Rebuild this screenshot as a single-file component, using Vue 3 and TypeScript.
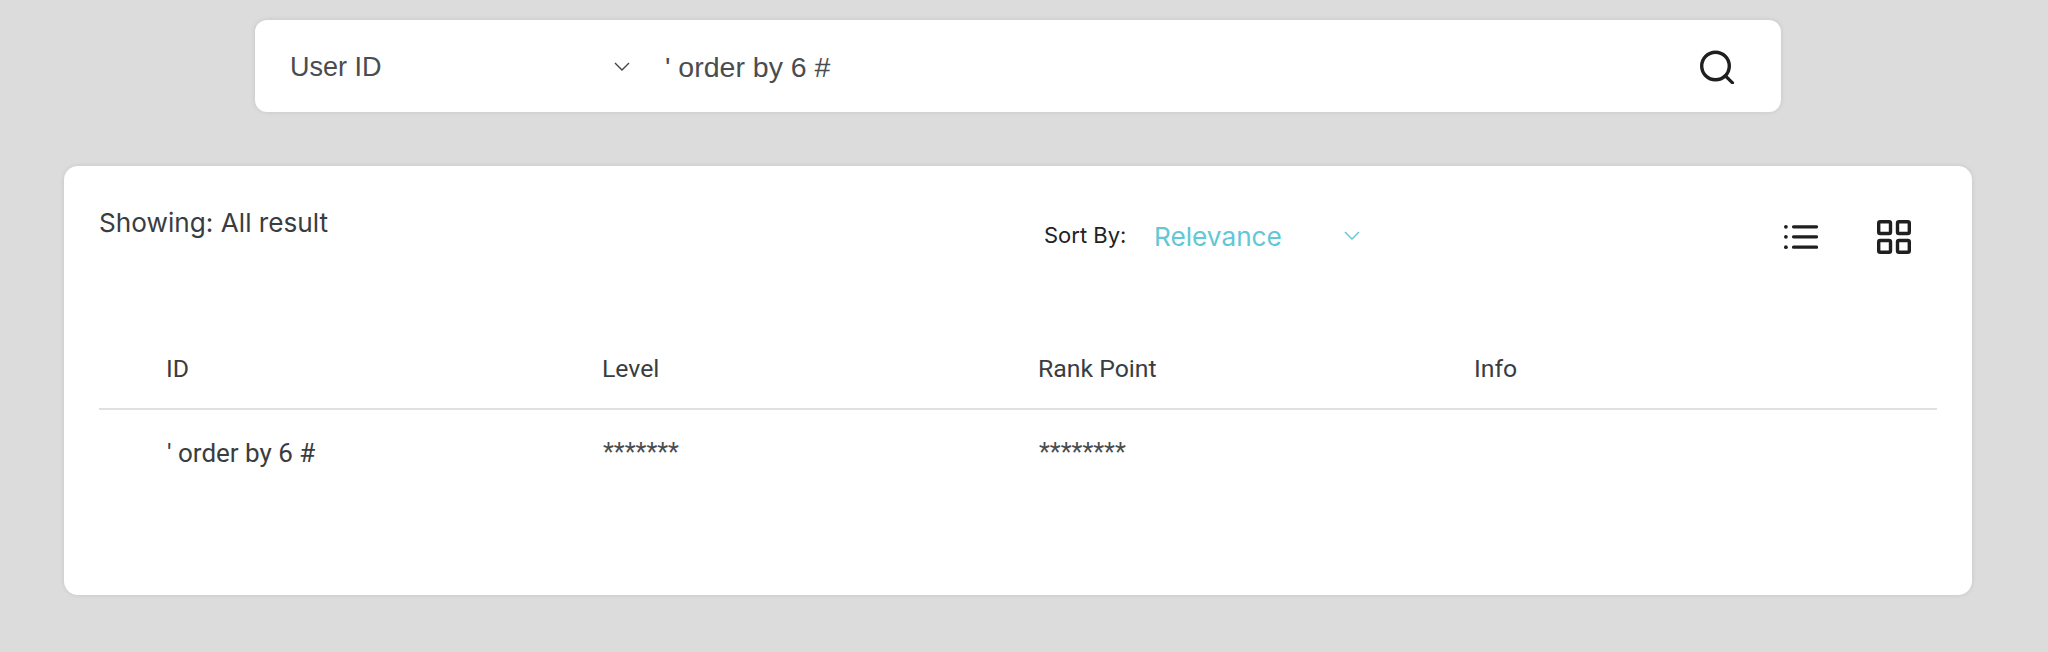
<script setup lang="ts">
const columns = ['ID', 'Level', 'Rank Point', 'Info']
const row = ["' order by 6 #", '*******', '********', '']
</script>

<template>
  <div class="page">
    <div class="search">
      <div class="field">
        <span>User ID</span>
        <svg class="chevron" width="18" height="11" viewBox="0 0 18 11" fill="none">
          <path d="M2 2l7 7 7-7" stroke="#444" stroke-width="1.4" />
        </svg>
      </div>
      <div class="query">' order by 6 #</div>
      <svg width="36" height="36" viewBox="0 0 36 36" fill="none">
        <circle cx="16.5" cy="18" r="13.8" stroke="#1f1f1f" stroke-width="3.4" />
        <path d="M26.5 28l7 6.8" stroke="#1f1f1f" stroke-width="3.2" stroke-linecap="round" />
      </svg>
    </div>

    <div class="card">
      <div class="toolbar">
        <div class="showing">Showing: All result</div>
        <div class="sort">
          <span class="sort-label">Sort By:</span>
          <span class="sort-value">Relevance</span>
          <svg width="18" height="11" viewBox="0 0 18 11" fill="none">
            <path d="M2 2l7 7 7-7" stroke="#5fc5d3" stroke-width="1.4" />
          </svg>
        </div>
        <div class="views">
          <svg width="34" height="30" viewBox="0 0 34 30" fill="none">
            <g fill="#1f1f1f">
              <circle cx="1.9" cy="4.8" r="1.9" />
              <circle cx="1.9" cy="14.8" r="1.9" />
              <circle cx="1.9" cy="25.2" r="1.9" />
            </g>
            <path
              d="M9.5 4.8h23M9.5 14.8h23M9.5 25.2h23"
              stroke="#1f1f1f"
              stroke-width="3.2"
              stroke-linecap="round"
            />
          </svg>
          <svg width="34" height="34" viewBox="0 0 34 34" fill="none" stroke="#1f1f1f" stroke-width="3.4">
            <rect x="1.7" y="1.7" width="11.8" height="11.8" rx="1.5" />
            <rect x="20.5" y="1.7" width="11.8" height="11.8" rx="1.5" />
            <rect x="1.7" y="20.5" width="11.8" height="11.8" rx="1.5" />
            <rect x="20.5" y="20.5" width="11.8" height="11.8" rx="1.5" />
          </svg>
        </div>
      </div>

      <div class="table-head">
        <div v-for="c in columns" :key="c" class="cell">{{ c }}</div>
      </div>
      <div class="table-row">
        <div v-for="(v, i) in row" :key="i" class="cell" :class="{ masked: i > 0 }">{{ v }}</div>
      </div>
    </div>
  </div>
</template>

<style>
html,
body {
  margin: 0;
  background: #dcdcdc;
}
</style>

<style scoped>
.page {
  height: 652px;
  box-sizing: border-box;
  padding: 20px 76px 0 64px;
  background: #dcdcdc;
  display: flex;
  flex-direction: column;
  align-items: center;
  gap: 54px;
  font-family: Inter, "Liberation Sans", sans-serif;
  color: #3a3d40;
}

.search {
  width: 1526px;
  height: 92px;
  box-sizing: border-box;
  background: #fff;
  border-radius: 12px;
  box-shadow: 0 0 5px rgba(0, 0, 0, 0.1);
  display: flex;
  align-items: center;
  padding: 0 46px 0 35px;
  font-family: "Liberation Sans", sans-serif;
  font-size: 27px;
  color: #4a4d50;
}

.field {
  width: 346px;
  display: flex;
  align-items: center;
  justify-content: space-between;
  margin-right: 29px;
  padding: 2px 5px 0 0;
  box-sizing: border-box;
}

.chevron {
  margin-top: -2px;
}

.query {
  flex: 1;
  padding-top: 2px;
  font-size: 28.5px;
}

.card {
  width: 1908px;
  height: 429px;
  box-sizing: border-box;
  background: #fff;
  border-radius: 14px;
  box-shadow: 0 0 5px rgba(0, 0, 0, 0.1);
  padding: 0 35px;
}

.toolbar {
  height: 129px;
  display: flex;
  align-items: flex-start;
}

.showing {
  width: 945px;
  margin-top: 41px;
  font-size: 26.2px;
  line-height: 32px;
}

.sort {
  width: 740px;
  margin-top: 51px;
  height: 36px;
  display: flex;
  align-items: center;
}

.sort-label {
  font-size: 22px;
  color: #222;
  width: 110px;
}

.sort-value {
  font-size: 26.2px;
  color: #62c7d6;
  width: 189px;
  margin-top: 2px;
}

.views {
  margin-top: 54px;
  display: flex;
  align-items: center;
  gap: 59px;
}

.table-head,
.table-row {
  display: grid;
  grid-template-columns: repeat(4, 436px);
  padding-left: 67px;
  font-family: Roboto, sans-serif;
  color: #3a3d40;
}

.table-head {
  height: 115px;
  padding-top: 60px;
  box-sizing: border-box;
  font-size: 24.8px;
  line-height: 28px;
  border-bottom: 2px solid #e0e0e0;
}

.table-row {
  padding-top: 27px;
  font-size: 26px;
  line-height: 32px;
}

.cell {
  padding-left: 1px;
}

.table-head .cell {
  padding-left: 0;
}

.masked {
  font-size: 25.2px;
  color: #4a4d50;
}
</style>
